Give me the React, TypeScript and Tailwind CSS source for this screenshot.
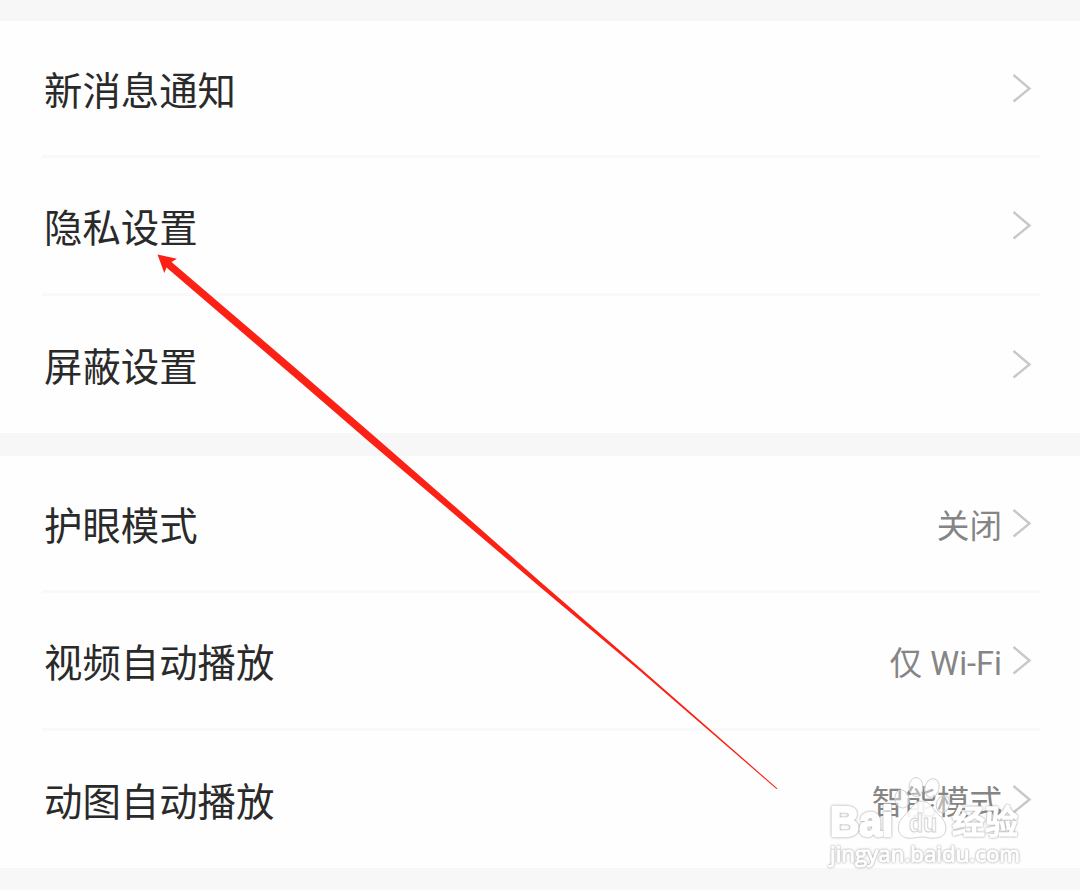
interface SettingItem {
  label: string;
  value?: string;
}

const groups: SettingItem[][] = [
  [{ label: '新消息通知' }, { label: '隐私设置' }, { label: '屏蔽设置' }],
  [
    { label: '护眼模式', value: '关闭' },
    { label: '视频自动播放', value: '仅 Wi-Fi' },
    { label: '动图自动播放', value: '智能模式' },
  ],
];

const Chevron = () => (
  <svg className="ml-2.5 h-8 w-5 shrink-0" viewBox="0 0 20 32" fill="none">
    <path d="M1.5 2 L17.5 15.5 L1.5 28.5" stroke="#c8c8c8" strokeWidth="2.4" />
  </svg>
);

const SettingRow = ({ item, last }: { item: SettingItem; last: boolean }) => (
  <div
    className={`ml-[42px] mr-10 flex items-center justify-between pt-0.5 ${
      last ? '' : 'border-b-[3px] border-[#f9f9f9]'
    }`}
  >
    <span className="ml-0.5 pt-1.5 text-[38.4px] leading-none text-[#2a2a2a]">{item.label}</span>
    <div className="mr-2 flex items-center">
      <span className="pt-1.5 text-[32.6px] leading-none text-[#858585]">{item.value}</span>
      <Chevron />
    </div>
  </div>
);

// Long tapered pointer towards the privacy entry
const Arrow = () => (
  <svg className="pointer-events-none absolute left-0 top-0" width="1080" height="892">
    <path
      d="M157.5 254.5 L177 258.7 L171.5 262 L300 372 L370 432.5 L470 519.7 L540 581.5 L640 668 L777.5 788.5 L776.5 789 L640 671 L540 587 L470 527.5 L370 442.5 L300 382 L166.5 267.5 L164.3 273 Z"
      fill="#fb2115"
    />
  </svg>
);

const Watermark = () => (
  <svg className="pointer-events-none absolute left-0 top-0" width="1080" height="892">
    <g fill="#ffffff" fillOpacity="0.4" stroke="#d2d2d2" strokeWidth="1">
      <ellipse cx="902" cy="799" rx="7" ry="9" transform="rotate(-15 902 799)" />
      <ellipse cx="916" cy="787" rx="7" ry="9.5" />
      <ellipse cx="932" cy="788" rx="7" ry="9.5" transform="rotate(15 932 788)" />
      <ellipse cx="943" cy="804" rx="6.5" ry="8.5" transform="rotate(20 943 804)" />
      <path
        d="M922 801 C930 801 933 810 940 816 C948 823 949 837 936 838 C930 839 927 837 922 837 C917 837 913 839 907 838 C896 836 896 823 904 816 C911 810 914 801 922 801 Z"
        fillOpacity="0.9"
      />
      <text
        x="909"
        y="832"
        fontSize="25"
        fontFamily="'Liberation Sans', sans-serif"
        fontWeight="bold"
        textLength="28"
        lengthAdjust="spacingAndGlyphs"
      >
        du
      </text>
    </g>
    <g
      className="[filter:drop-shadow(0_0_0.8px_#929292)]"
      fill="#ffffff"
      stroke="#ffffff"
      strokeLinejoin="round"
      fontWeight="bold"
    >
      <text x="830" y="836" fontSize="43" strokeWidth="2.5" fontFamily="'Liberation Sans', sans-serif" textLength="63" lengthAdjust="spacingAndGlyphs">
        Bai
      </text>
      <text x="952" y="834" fontSize="33" strokeWidth="1.5" fontWeight="500" fontFamily="'Noto Sans CJK SC', sans-serif" textLength="66" lengthAdjust="spacingAndGlyphs">
        经验
      </text>
      <text x="830" y="862" fontSize="22" strokeWidth="1" fontWeight="400" fontFamily="'Open Sans', sans-serif" textLength="190" lengthAdjust="spacingAndGlyphs">
        jingyan.baidu.com
      </text>
    </g>
  </svg>
);

const App = () => {
  return (
    <div
      lang="zh-CN"
      className="relative flex h-[892px] w-[1080px] flex-col overflow-hidden bg-white font-['Roboto','Noto_Sans_CJK_SC',sans-serif]"
    >
      <div className="h-[21px] bg-[#f7f7f7]" />
      {groups.map((group, i) => (
        <div key={i}>
          <div className="grid h-[412px] grid-rows-3 bg-[#fefefe]">
            {group.map((item, j) => (
              <SettingRow key={item.label} item={item} last={j === group.length - 1} />
            ))}
          </div>
          <div className={i === 0 ? 'h-[23px] bg-[#f7f7f7]' : 'h-[22px] bg-[#f7f7f7]'} />
        </div>
      ))}
      <Watermark />
      <Arrow />
    </div>
  );
};

export default App;
